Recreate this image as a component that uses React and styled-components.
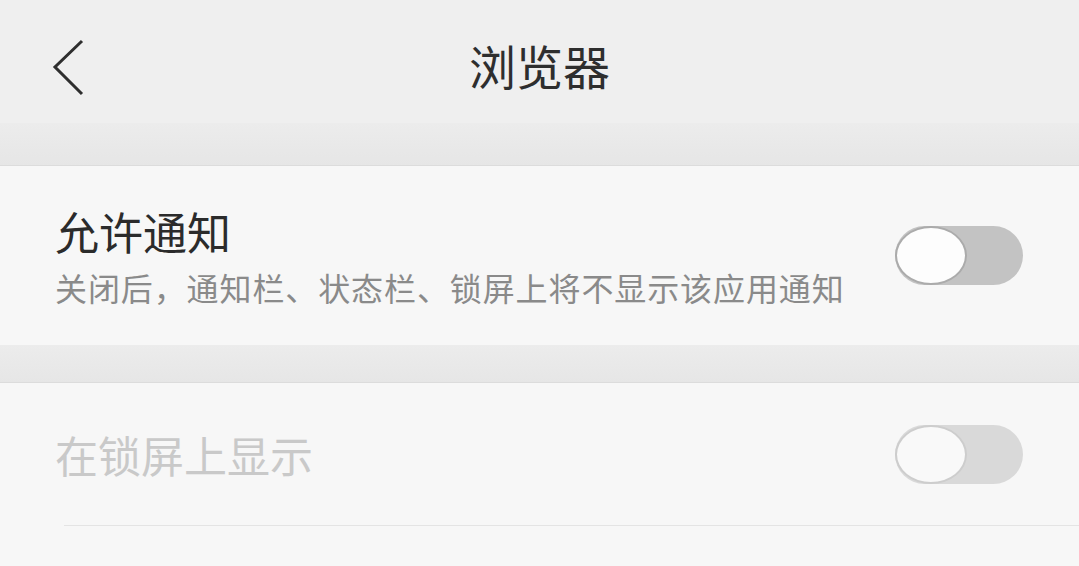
import styled, { createGlobalStyle } from "styled-components"

const GlobalStyle = createGlobalStyle`
  body {
    margin: 0;
    background: #f7f7f7;
    font-family: "Noto Sans CJK SC", "Noto Sans", sans-serif;
  }
`

const Page = styled.div`
  display: flex;
  flex-direction: column;
  width: 1079px;
  height: 566px;
  overflow: hidden;
  background: #f7f7f7;
`

const Header = styled.header`
  height: 123px;
  display: grid;
  grid-template-columns: 1fr auto 1fr;
  align-items: center;
  background: #efefef;
`

const BackButton = styled.button`
  justify-self: start;
  margin-left: 52px;
  margin-top: 14px;
  padding: 0;
  border: 0;
  background: none;
  display: flex;
`

const Title = styled.h1`
  margin: 6px 0 0;
  font-size: 47px;
  font-weight: 400;
  line-height: 1;
  color: #2e2e2e;
`

const Gap = styled.div`
  height: ${(p) => p.$h}px;
  background: linear-gradient(#ececec, #e6e6e6);
  border-bottom: 1px solid #dcdcdc;
`

const Row = styled.div`
  height: ${(p) => p.$h}px;
  display: flex;
  align-items: center;
  justify-content: space-between;
  padding: 0 56px 0 55px;
  background: #f7f7f7;
`

const TextBlock = styled.div`
  display: flex;
  flex-direction: column;
  gap: 18px;
`

const RowTitle = styled.div`
  font-size: ${(p) => (p.$disabled ? 43 : 44)}px;
  line-height: 1;
  color: ${(p) => (p.$disabled ? "#c9c9c9" : "#2b2b2b")};
`

const RowSub = styled.div`
  font-size: 32px;
  line-height: 1;
  letter-spacing: 0.9px;
  color: #8a8a8a;
`

const Divider = styled.div`
  height: 1px;
  margin-left: 64px;
  background: #e4e4e4;
`

const Track = styled.div`
  width: 128px;
  height: 59px;
  border-radius: 30px;
  background: ${(p) => (p.$disabled ? "#d9d9d9" : "#c3c3c3")};
  display: flex;
  align-items: center;
`

const Knob = styled.div`
  width: 72px;
  height: 100%;
  box-sizing: border-box;
  border-radius: 50%;
  background: ${(p) => (p.$disabled ? "#f9f9f9" : "#fdfdfd")};
  border: 2px solid ${(p) => (p.$disabled ? "#cdcdcd" : "#ababab")};
`

const Toggle = ({ disabled }) => (
  <Track $disabled={disabled}>
    <Knob $disabled={disabled} />
  </Track>
)

const App = () => {
  return (
    <Page>
      <GlobalStyle />
      <Header>
        <BackButton>
          <svg width="34" height="58" viewBox="0 0 34 58">
            <polyline
              points="30,2 3,28 30,55"
              fill="none"
              stroke="#2e2e2e"
              strokeWidth="3"
            />
          </svg>
        </BackButton>
        <Title>浏览器</Title>
        <div />
      </Header>
      <Gap $h={42} />
      <Row $h={180}>
        <TextBlock>
          <RowTitle>允许通知</RowTitle>
          <RowSub>关闭后，通知栏、状态栏、锁屏上将不显示该应用通知</RowSub>
        </TextBlock>
        <Toggle />
      </Row>
      <Gap $h={37} />
      <Row $h={142}>
        <RowTitle $disabled>在锁屏上显示</RowTitle>
        <Toggle disabled />
      </Row>
      <Divider />
      <Row $h={40} />
    </Page>
  )
}

export default App
